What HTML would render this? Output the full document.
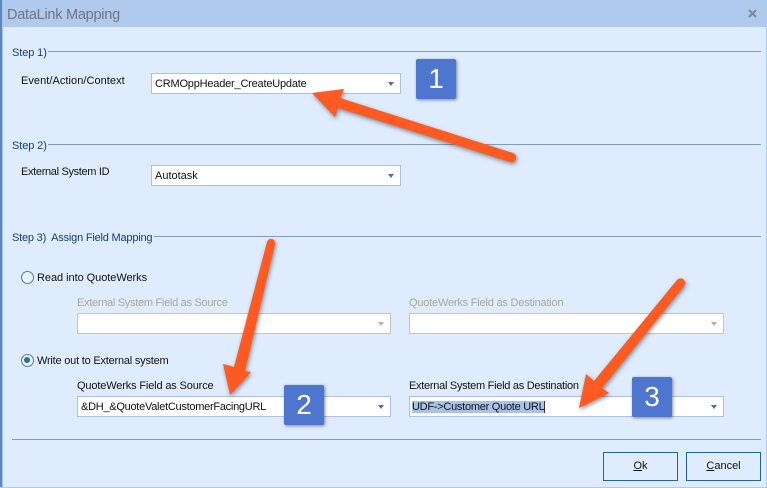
<!DOCTYPE html>
<html><head><meta charset="utf-8">
<style>
html,body{margin:0;padding:0}
body{width:767px;height:488px;position:relative;overflow:hidden;background:#dfecfd;font-family:"Liberation Sans",sans-serif;font-size:11px;color:#111}
.a{position:absolute;white-space:nowrap;line-height:14px}
.title{left:0;top:0;width:767px;height:27px;background:#b0caee}
.bl{left:0;top:0;width:2px;height:488px;background:#5f86c4}
.bl2{left:2px;top:0;width:1px;height:488px;background:#a9c4ea}
.br{left:766px;top:0;width:1px;height:488px;background:#b0caee}
.bb{left:0;top:487px;width:767px;height:1px;background:#b0caee}
.line{height:1px;background:#7f9cc0}
.step{color:#15406e}
.combo{box-sizing:border-box;height:21px;background:#fff;border:1px solid #abc1e0}
.combo.d{border-color:#c6c6bc}
.combo i{position:absolute;right:6px;top:8px;width:0;height:0;border-left:3.5px solid transparent;border-right:3.5px solid transparent;border-top:4px solid #4f6fa8}
.combo.d i{border-top-color:#bba9c4}
.combo span{position:absolute;left:3px;top:3px;line-height:15px;white-space:nowrap}
.dis{color:#a8a89c}
.badge{width:40px;height:40px;background:#4f76cf;border-radius:2px;box-shadow:1px 1px 3px rgba(40,50,70,.55);color:#fff;font-size:28px;line-height:40px;text-align:center}
.radio{box-sizing:border-box;width:13px;height:13px;border:1.5px solid #4a7dab;border-radius:50%;background:#eaf2fe}
.radio b{position:absolute;left:2px;top:2px;width:6px;height:6px;border-radius:50%;background:#2f6aa0}
.btn{box-sizing:border-box;width:75px;height:29px;border:1px solid #1f6596;text-align:center;line-height:27px;font-size:11px}
svg.arrows{position:absolute;left:0;top:0;filter:drop-shadow(1.5px 2.5px 2px rgba(40,40,40,.5))}
svg.x{position:absolute;left:747px;top:8px}
</style></head><body>
<div class="a title"></div>
<div class="a bl"></div><div class="a bl2"></div><div class="a br"></div><div class="a bb"></div>
<div class="a" style="left:7px;top:7px;font-size:14.5px;line-height:17px;color:#70757f;letter-spacing:-.25px">DataLink Mapping</div>
<svg class="x" width="11" height="11" viewBox="0 0 11 11"><path d="M2 2L9 9M9 2L2 9" stroke="#7f8a99" stroke-width="2.2" fill="none"/></svg>

<div class="a step" style="left:12px;top:46px;letter-spacing:-.1px">Step 1)</div>
<div class="a line" style="left:48px;top:51px;width:713px"></div>
<div class="a" style="left:21px;top:74px;letter-spacing:.05px">Event/Action/Context</div>
<div class="a combo" style="left:151px;top:73px;width:250px"><span style="letter-spacing:-.2px">CRMOppHeader_CreateUpdate</span><i></i></div>

<div class="a step" style="left:12px;top:139px;letter-spacing:-.1px">Step 2)</div>
<div class="a line" style="left:48px;top:144px;width:713px"></div>
<div class="a" style="left:21px;top:165px;letter-spacing:-.33px">External System ID</div>
<div class="a combo" style="left:151px;top:165px;width:250px"><span>Autotask</span><i></i></div>

<div class="a step" style="left:12px;top:231px;letter-spacing:-.2px">Step 3)&nbsp; Assign Field Mapping</div>
<div class="a line" style="left:154px;top:236px;width:607px"></div>

<div class="a radio" style="left:21px;top:271px"></div>
<div class="a" style="left:37px;top:271px;letter-spacing:-.05px">Read into QuoteWerks</div>
<div class="a dis" style="left:77px;top:296px;letter-spacing:-.29px">External System Field as Source</div>
<div class="a combo d" style="left:77px;top:313px;width:314px"><i></i></div>
<div class="a dis" style="left:409px;top:296px;letter-spacing:-.2px">QuoteWerks Field as Destination</div>
<div class="a combo d" style="left:409px;top:313px;width:315px"><i></i></div>

<div class="a radio" style="left:21px;top:354px"><b></b></div>
<div class="a" style="left:37px;top:354px;letter-spacing:-.21px">Write out to External system</div>
<div class="a" style="left:77px;top:379px;letter-spacing:-.15px">QuoteWerks Field as Source</div>
<div class="a combo" style="left:77px;top:396px;width:314px"><span style="letter-spacing:-.27px">&amp;DH_&amp;QuoteValetCustomerFacingURL</span><i></i></div>
<div class="a" style="left:409px;top:379px;letter-spacing:-.28px">External System Field as Destination</div>
<div class="a combo" style="left:409px;top:396px;width:315px"><span style="left:2px"><span style="position:static;background:#a9c3e6;border-right:1px solid #333;letter-spacing:-.26px">UDF-&gt;Customer Quote URL</span></span><i></i></div>

<div class="a line" style="left:12px;top:439px;width:749px"></div>
<div class="a btn" style="left:603px;top:452px"><u>O</u>k</div>
<div class="a btn" style="left:686px;top:452px"><u>C</u>ancel</div>

<svg class="arrows" width="767" height="488" viewBox="0 0 767 488">
<g fill="#ff5a22">
<path d="M312 93L344 89L340 98L513 153A4.5 4.5 0 0 1 510 162L338 108L335 117Z"/>
<path d="M230 395L223 364L234 367L267 242A4 4 0 0 1 275 244L245 371L251 372Z"/>
<path d="M579 408L586 374L594 381L677 280A4.5 4.5 0 0 1 684 286L602 388L609 393Z"/>
</g></svg>

<div class="a badge" style="left:416px;top:59px">1</div>
<div class="a badge" style="left:284px;top:385px">2</div>
<div class="a badge" style="left:632px;top:377px">3</div>
</body></html>
